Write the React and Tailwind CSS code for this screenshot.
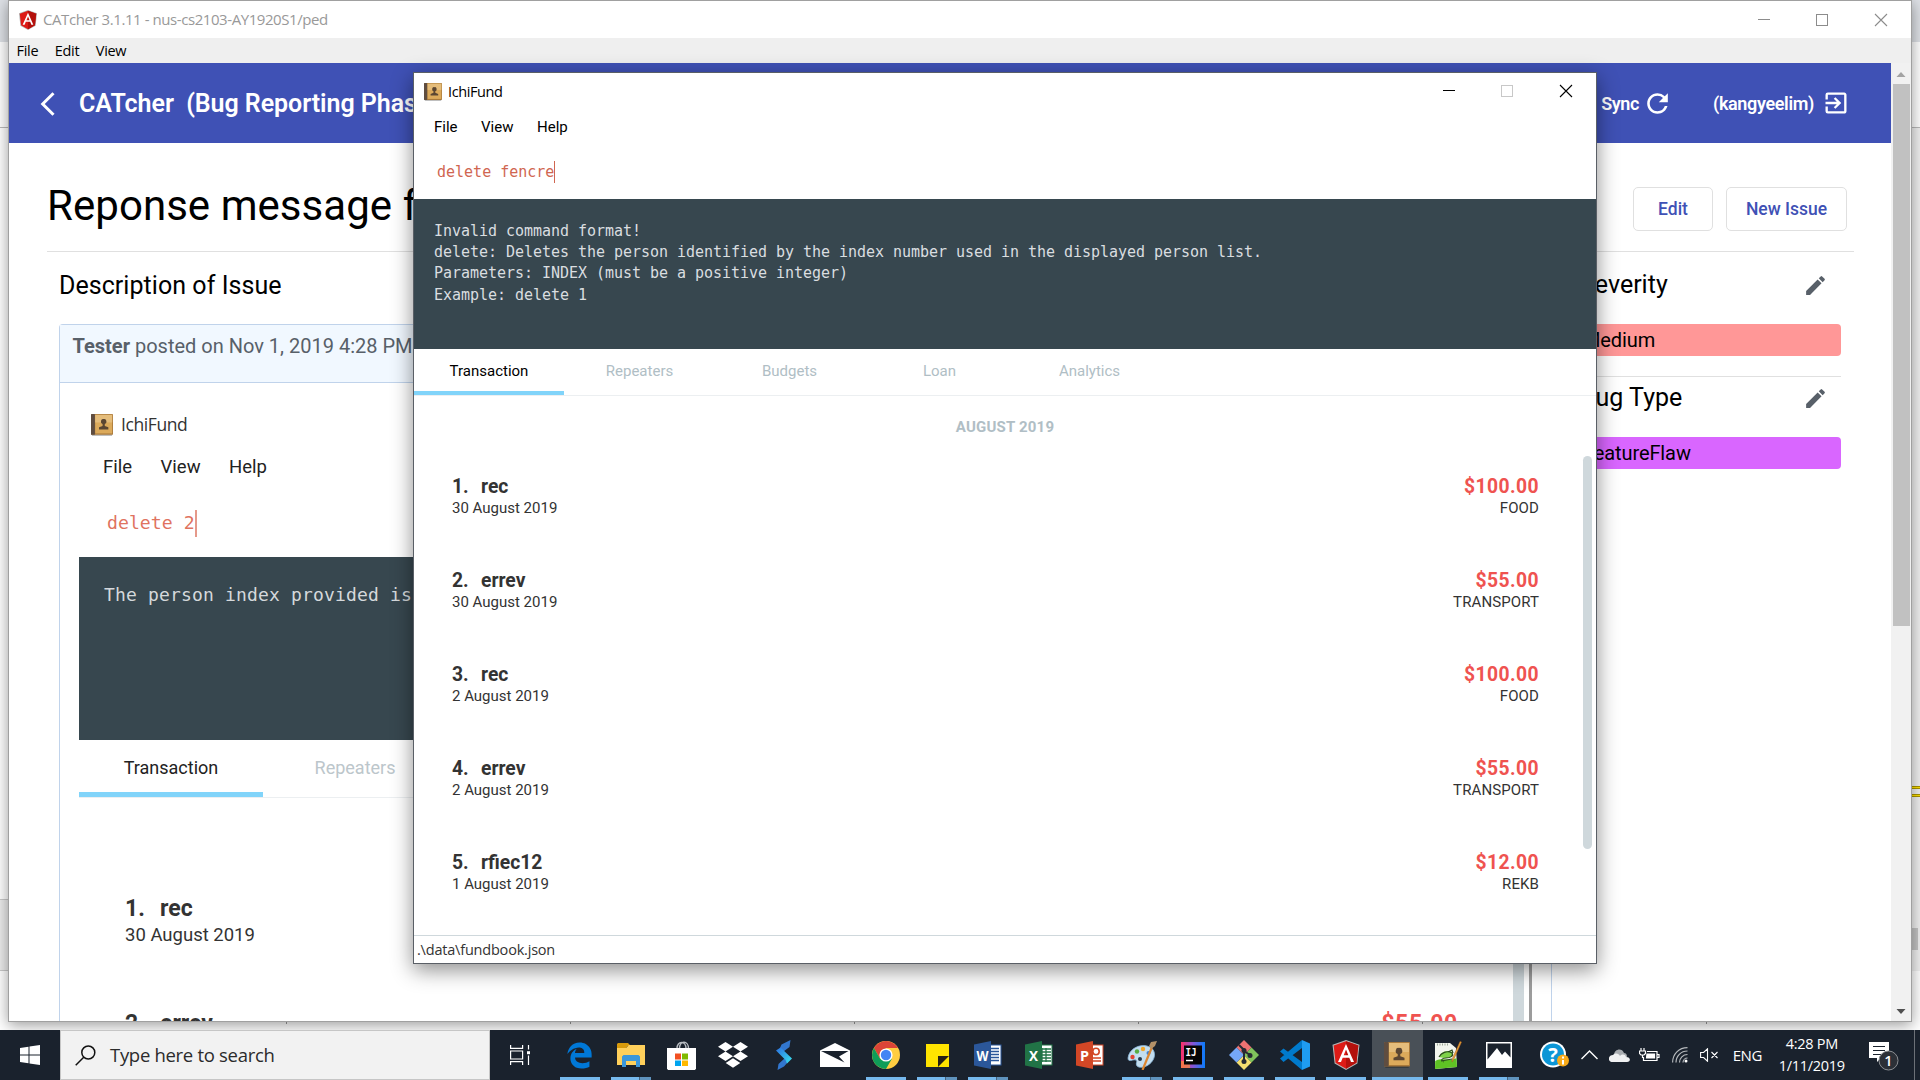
import React from "react";
import { MdRefresh, MdExitToApp, MdEdit } from "react-icons/md";
import { FaEdgeLegacy } from "react-icons/fa";

const ROBOTO = "font-['Roboto','Liberation_Sans',sans-serif]";
const SEGOE = "font-['Open_Sans','Noto_Sans',sans-serif]";
const MONO = "font-['DejaVu_Sans_Mono','Liberation_Mono',monospace]";

const transactions = [
  { id: 1, name: "rec", date: "30 August 2019", amount: "$100.00", category: "FOOD" },
  { id: 2, name: "errev", date: "30 August 2019", amount: "$55.00", category: "TRANSPORT" },
  { id: 3, name: "rec", date: "2 August 2019", amount: "$100.00", category: "FOOD" },
  { id: 4, name: "errev", date: "2 August 2019", amount: "$55.00", category: "TRANSPORT" },
  { id: 5, name: "rfiec12", date: "1 August 2019", amount: "$12.00", category: "REKB" },
];

function AngularLogo({ className }) {
  return (
    <svg viewBox="0 0 28 30" className={className}>
      <path d="M14 0 27.5 4.8 25.4 23.5 14 30 2.6 23.5 .5 4.8Z" fill="#b3b3b3" />
      <path d="M14 1.2 26.3 5.6 24.4 22.8 14 28.7 3.6 22.8 1.7 5.6Z" fill="#dd1b16" />
      <path d="M14 1.2 26.3 5.6 24.4 22.8 14 28.7Z" fill="#b3110c" />
      <path d="M14 4 6 22h3l1.7-4.2h6.6L19 22h3ZM14 9.6l2.3 5.7h-4.6Z" fill="#fff" fillRule="evenodd" />
    </svg>
  );
}

function AddressBook({ className }) {
  return (
    <svg viewBox="0 0 26 26" className={className}>
      <rect x="1" y="24" width="24" height="2" rx="1" fill="#000" opacity=".25" />
      <rect x="0" y="0" width="26" height="24.5" rx="1" fill="#a9793a" />
      <rect x="5" y="1" width="20" height="22" fill="#dcaa5b" />
      <rect x="5" y="1" width="20" height="9" fill="#e5bd7b" />
      <rect x="0" y="0" width="4.6" height="24.5" rx="1" fill="#5f4d40" />
      <path d="M15 6a2.600 3 0 0 1 1.300 5.900v2.300l4.200 1.600v2.400h-11v-2.400l4.200-1.600v-2.300A2.600 3 0 0 1 15 6Z" fill="#5b4632" />
    </svg>
  );
}

function WindowButtons({ tone, maxTone }) {
  return (
    <div className="flex pr-[2px]">
      <svg width="58" height="36" viewBox="0 0 58 36" stroke={tone} fill="none" shapeRendering="crispEdges">
        <path d="M23 17.500h12" />
      </svg>
      <svg width="58" height="36" viewBox="0 0 58 36" stroke={maxTone} fill="none" shapeRendering="crispEdges">
        <rect x="23.500" y="12.500" width="11" height="11" />
      </svg>
      <svg width="58" height="36" viewBox="0 0 58 36" stroke={tone} fill="none" strokeWidth="1.100">
        <path d="m24 12 12 12M36 12 24 24" />
      </svg>
    </div>
  );
}

function SideSection({ title, value, chip, last }) {
  return (
    <section className="h-[113px]">
      <div className="flex h-[44px] items-center justify-between pr-[13px] text-[25px] text-black">
        <h3 className="leading-[30px]">{title}</h3>
        <MdEdit className="size-[25px] text-[#586069]" />
      </div>
      <div className={`mt-[17px] flex h-[32px] items-center rounded-[4px] pl-[3px] text-[20px] tracking-[-0.100px] text-black ${chip}`}>{value}</div>
      {!last && <div className="mt-[20px] h-px bg-[#e0e0e0]" />}
    </section>
  );
}

function PostedImage() {
  return (
    <div className={`relative ml-[19px] h-[640px] w-[1453px] border-r-[3px] border-[#9c9c9c] ${ROBOTO}`}>
      <div className="flex h-[36px] items-center pl-[12px] pt-[3px]">
        <AddressBook className="size-[22px]" />
        <span className={`ml-[8px] text-[17.500px] tracking-[-0.400px] text-[#333] ${SEGOE}`}>IchiFund</span>
      </div>
      <div className="mt-[7px] flex h-[40px] items-center gap-[28.500px] pl-[24px] text-[18.500px] text-[#222]">
        <span>File</span><span>View</span><span>Help</span>
      </div>
      <div className={`mt-[15px] flex h-[40px] items-center pl-[28px] text-[18.200px] text-[#e0735f] ${MONO}`}>
        delete 2<span className="h-[27px] w-[2px] bg-[#e5998a]" />
      </div>
      <div className="mt-[14px] flex h-[183px] items-start bg-[#37474f] pl-[25px] pt-[25px]">
        <span className={`whitespace-pre text-[18px] leading-[26px] tracking-[0.160px] text-[#d5d9dc] ${MONO}`}>The person index provided is</span>
      </div>
      <div className="flex h-[58px] border-b border-[#eceff1] text-[18px]">
        <div className="flex w-[184px] items-center justify-center border-b-[5px] border-[#81d4fa] pt-[2px] text-[#222]">Transaction</div>
        <div className="flex w-[184px] items-center justify-center pb-[3px] text-[#bcc6cb]">Repeaters</div>
      </div>
      <div className="pl-[46px] pr-[71px] pt-[97px]">
        {transactions.slice(0, 2).map((t) => (
          <div key={t.id} className="flex h-[115px] justify-between">
            <div className="text-[#333]">
              <div className="flex text-[23px] font-bold leading-[28px]"><span className="w-[35px]">{t.id}.</span>{t.name}</div>
              {t.id === 1 && <div className="text-[18.500px] leading-[24px]">{t.date}</div>}
            </div>
            {t.id === 2 && <div className="text-[23px] font-bold leading-[28px] tracking-[0.700px] text-[#ef5350]">{t.amount}</div>}
          </div>
        ))}
      </div>
      <div className="absolute right-[5px] top-[320px] h-[320px] w-[11px] bg-[#cfd8dc]" />
    </div>
  );
}

function CatcherWindow() {
  return (
    <div className={`absolute left-[8px] top-0 flex h-[1022px] w-[1904px] flex-col border border-[#a0a0a0] bg-white shadow-[0_3px_14px_rgba(0,0,0,0.400)] ${ROBOTO}`}>
      <div className="flex h-[37px] shrink-0 items-center justify-between pl-[9px]">
        <div className="flex items-center">
          <AngularLogo className="h-[20px] w-[20px]" />
          <span className={`ml-[5px] whitespace-pre text-[15px] tracking-[-0.430px] text-[#999] ${SEGOE}`}>CATcher 3.1.11 - nus-cs2103-AY1920S1/ped</span>
        </div>
        <WindowButtons tone="#8c8c8c" maxTone="#8c8c8c" />
      </div>
      <div className={`flex h-[25px] shrink-0 items-center gap-[16.500px] bg-[#efefef] pl-[7.500px] text-[14.500px] tracking-[-0.300px] text-black ${SEGOE}`}>
        <span>File</span><span>Edit</span><span>View</span>
      </div>
      <div className="flex min-h-0 flex-1">
        <div className="flex min-w-0 flex-1 flex-col overflow-hidden">
          <header className="flex h-[80px] shrink-0 items-center justify-between bg-[#3f51b5] pl-[31px] pr-[41px] font-semibold text-white">
            <div className="flex items-center text-[25px]">
              <svg width="15" height="24" viewBox="0 0 15 24" fill="none" stroke="#fff" strokeWidth="3" className="mt-[2px]"><path d="M13.500 1.200 2.700 12l10.800 10.800" /></svg>
              <span className="ml-[24px] whitespace-pre pt-[2px] tracking-[-0.050px]">CATcher  (Bug Reporting Phase)</span>
            </div>
            <div className="flex items-center text-[18px] tracking-[-0.400px]">
              <span>Sync</span>
              <MdRefresh className="ml-[3px] size-[31px]" />
              <span className="ml-[40px] tracking-[-0.350px]">(kangyeelim)</span>
              <MdExitToApp className="ml-[8px] size-[28px]" />
            </div>
          </header>
          <main className="flex min-h-0 flex-1 flex-col pl-[38px] pr-[37px]">
            <div className="flex h-[109px] shrink-0 items-center justify-between border-b border-[#e0e0e0] pr-[7px]">
              <h1 className="pt-[18px] text-[42px] leading-[50px] tracking-[0.050px] text-black">Reponse message f</h1>
              <div className="flex gap-[13px] pt-[23px] text-[17.500px] font-medium leading-none text-[#3f51b5]">
                <button className="h-[44px] w-[80px] rounded-[5px] border border-[#e0e0e0] pt-[2px]">Edit</button>
                <button className="h-[44px] w-[121px] rounded-[5px] border border-[#e0e0e0] pt-[2px]">New Issue</button>
              </div>
            </div>
            <div className="flex min-h-0 flex-1 justify-between pr-[13px]">
              <div className="flex w-[1505px] flex-col pl-[12px]">
                <h2 className="h-[72px] shrink-0 pt-[19px] text-[25px] leading-[30px] tracking-[0.050px] text-black">Description of Issue</h2>
                <div className="min-h-0 flex-1 rounded-t-[4px] border border-b-0 border-[#c0d3eb]">
                  <div className="h-[58px] border-b border-[#c0d3eb] bg-[#f1f8ff] pl-[12.500px] pt-[6px] text-[20px] leading-[30px] text-[#586069]">
                    <b>Tester</b> posted on Nov 1, 2019 4:28 PM.
                  </div>
                  <div className="pt-[22px]"><PostedImage /></div>
                </div>
              </div>
              <aside className="w-[261px] pt-[11px]">
                <SideSection title="Severity" value="Medium" chip="bg-[#ff9797]" />
                <SideSection title="Bug Type" value="FeatureFlaw" chip="bg-[#d966ff]" last />
              </aside>
            </div>
          </main>
        </div>
        <div className="flex w-[20px] flex-col items-center justify-between bg-[#f1f1f1]">
          <svg width="20" height="21" viewBox="0 0 20 21"><path d="m5.500 14 4.500-5 4.500 5Z" fill="#a3a3a3" /></svg>
          <div className="mb-auto h-[542px] w-[17px] bg-[#c1c1c1]" />
          <svg width="20" height="21" viewBox="0 0 20 21"><path d="m5.500 9 4.500 5 4.500-5Z" fill="#505050" /></svg>
        </div>
      </div>
    </div>
  );
}

function IchiFundWindow() {
  return (
    <div className={`absolute left-[413px] top-[72px] flex h-[892px] w-[1184px] flex-col border border-[#5a5f66] bg-white shadow-[0_6px_20px_rgba(0,0,0,0.450)] ${ROBOTO}`}>
      <div className="flex h-[37px] shrink-0 items-start justify-between pl-[10px]">
        <div className="flex h-[37px] items-center">
          <AddressBook className="size-[18px]" />
          <span className={`ml-[6px] text-[14.500px] tracking-[-0.400px] text-black ${SEGOE}`}>IchiFund</span>
        </div>
        <WindowButtons tone="#000" maxTone="#c8c8c8" />
      </div>
      <div className="flex h-[35px] shrink-0 items-center gap-[23.500px] pl-[20px] text-[15px] text-black">
        <span>File</span><span>View</span><span>Help</span>
      </div>
      <div className={`flex h-[54px] shrink-0 items-center pl-[23px] text-[15px] text-[#d06651] ${MONO}`}>
        delete fencre<span className="h-[22px] w-px bg-[#d06651]" />
      </div>
      <pre className={`h-[150px] shrink-0 bg-[#37474f] pl-[20px] pt-[21.500px] text-[15px] leading-[21.400px] tracking-[-0.030px] text-[#dadee0] ${MONO}`}>
        {"Invalid command format!\ndelete: Deletes the person identified by the index number used in the displayed person list.\nParameters: INDEX (must be a positive integer)\nExample: delete 1"}
      </pre>
      <div className="flex h-[47px] shrink-0 border-b border-[#eceff1] text-[15px]">
        <div className="flex w-[150px] items-center justify-center border-b-[4px] border-[#81d4fa] pt-[2px] text-black">Transaction</div>
        {["Repeaters", "Budgets", "Loan", "Analytics"].map((t) => (
          <div key={t} className="flex w-[150px] items-center justify-center pb-[2px] pl-px text-[#b0bec5]">{t}</div>
        ))}
      </div>
      <div className="flex h-[60px] shrink-0 items-center justify-center pt-[2px] text-[15px] font-bold tracking-[0.200px] text-[#b0bec5]">AUGUST 2019</div>
      <div className="flex min-h-0 flex-1 justify-between pl-[38px]">
        <div className="w-[1087px] pt-[19px]">
          {transactions.map((t) => (
            <div key={t.id} className="flex h-[94px] justify-between text-[15px] leading-[20px] text-[#333]">
              <div>
                <div className="flex text-[19.300px] font-bold leading-[24px]"><span className="w-[29px]">{t.id}.</span>{t.name}</div>
                <div className="-mt-px">{t.date}</div>
              </div>
              <div className="text-right">
                <div className="text-[19.300px] font-bold leading-[24px] tracking-[0.450px] text-[#ef5350]">{t.amount}</div>
                <div className="-mt-px tracking-[0.100px]">{t.category}</div>
              </div>
            </div>
          ))}
        </div>
        <div className="mr-[4px] h-[393px] w-[9px] rounded-full bg-[#cfd8dc]" />
      </div>
      <div className={`flex h-[28px] shrink-0 items-center border-t border-[#cfd8dc] pt-[1px] pl-[3px] text-[14.500px] tracking-[-0.200px] text-[#333] ${SEGOE}`}>.\data\fundbook.json</div>
    </div>
  );
}

function OfficeIcon({ letter, color, kind }) {
  return (
    <svg width="28" height="28" viewBox="0 0 28 28">
      <rect x="13" y="4" width="14" height="20" fill="#fff" stroke={color} />
      {kind === "word" && <path d="M16 7.500h9M16 10.500h9M16 13.500h9M16 16.500h9M16 19.500h9" stroke={color} strokeWidth="1.500" />}
      {kind === "excel" && <path d="M17 7v14M21 7v14M15 8h11M15 11h11M15 14h11M15 17h11M15 20h11" stroke={color} strokeWidth="1.300" />}
      {kind === "ppt" && <g fill="none" stroke={color} strokeWidth="1.600"><circle cx="20" cy="10.500" r="3.200" /><path d="M16 17h9M16 20h9" /></g>}
      <path d="M0 3.500 17 0v28L0 24.500Z" fill={color} />
      <text x="8.500" y="19.500" textAnchor="middle" fontSize="15" fontWeight="700" fontFamily="Open Sans, sans-serif" fill="#fff" textLength={kind === "word" ? 12 : 9} lengthAdjust="spacingAndGlyphs">{letter}</text>
    </svg>
  );
}

const icons = {
  edge: <FaEdgeLegacy className="size-[27px] text-[#0078d7]" />,
  explorer: (
    <svg width="28" height="24" viewBox="0 0 28 24">
      <path d="M1 0h10l3 3h-3l-2 2H0V1Z" fill="#d89a0b" />
      <path d="M0 5h9l3-3h16v20H0Z" fill="#ffd05b" />
      <path d="M5 24V13.500l1.500-1.500h15l1.500 1.500V24h-4v-6H9v6Z" fill="#3b97db" />
    </svg>
  ),
  store: (
    <svg width="29" height="29" viewBox="0 0 29 29">
      <path d="M10 7.500c0-8 9-8 9 0M12.500 7.500c0-9 9-8 9 0" fill="none" stroke="#b9bdc2" strokeWidth="1.400" />
      <path d="M0 7h29v20.500L28 29H1l-1-1.500Z" fill="#fff" />
      <path d="M8 12.500h6v6H8Z" fill="#f25022" /><path d="M15 12.500h6v6h-6Z" fill="#7fba00" />
      <path d="M8 19.500h6v5.500H8Z" fill="#00a4ef" /><path d="M15 19.500h6v5.500h-6Z" fill="#ffb900" />
    </svg>
  ),
  dropbox: (
    <svg width="30" height="26" viewBox="0 0 30 26" fill="#fff">
      <path d="m7.500 0 7.500 4.700-7.500 4.700L0 4.700ZM22.500 0 30 4.700l-7.500 4.700L15 4.700ZM7.500 9.600l7.500 4.700L7.500 19 0 14.300ZM22.500 9.600l7.500 4.700-7.500 4.700-7.500-4.700ZM15 16.200l7.300 4.700L15 25.700l-7.300-4.800Z" />
    </svg>
  ),
  shift: (
    <svg width="16" height="30" viewBox="0 0 16 30">
      <defs><linearGradient id="shift" x1="0" x2="1" y1="0" y2="1"><stop stopColor="#2c6fe0" /><stop offset="1" stopColor="#39e6ee" /></linearGradient></defs>
      <path d="M14.500 0 13.500 7 7.500 11.500 4 8 5.500 4.500ZM1.500 30 2.500 24l6-5.500L12 22l-4 4.500Z" fill="#3277cf" />
      <path d="M0 10.500 4.500 7.500 16 18.500l-5 5 -1.500-3.500Z" fill="url(#shift)" />
    </svg>
  ),
  mail: (
    <svg width="30" height="24" viewBox="0 0 30 24">
      <path d="M0 7.500 15 0l15 7.500V24H0Z" fill="#fff" />
      <path d="M1 8h27.500L19 13.500l5.500 6Z" fill="#1a222d" />
    </svg>
  ),
  chrome: (
    <svg width="28" height="28" viewBox="0 0 28 28">
      <circle cx="14" cy="14" r="14" fill="#ffcd41" />
      <path d="M1.900 7A14 14 0 0 1 26.100 7H14L8 17.500Z" fill="#db4437" />
      <path d="M1.900 7A14 14 0 0 0 14 28l6-10.500H8Z" fill="#0f9d58" />
      <circle cx="14" cy="14" r="6.600" fill="#fff" /><circle cx="14" cy="14" r="5.200" fill="#4285f4" />
    </svg>
  ),
  sticky: (
    <svg width="23" height="23" viewBox="0 0 23 23"><path d="M0 0h23v23H0Z" fill="#ffe400" /><path d="M12 12h11L12 23Z" fill="#252014" /></svg>
  ),
  word: <OfficeIcon letter="W" color="#2b579a" kind="word" />,
  excel: <OfficeIcon letter="X" color="#217346" kind="excel" />,
  ppt: <OfficeIcon letter="P" color="#d24726" kind="ppt" />,
  paint: (
    <svg width="30" height="29" viewBox="0 0 30 29">
      <path d="M1 17C2 8 12 3 20 5c8 2 9 9 6 14-4 7-13 9-16 6-2-3 1-4-1-6-3-1-8 3-8-2Z" fill="#c3def0" stroke="#87b4d6" strokeWidth=".8" />
      <circle cx="5.500" cy="16" r="2.200" fill="#e04433" /><circle cx="10" cy="10.500" r="2.200" fill="#58ad42" />
      <circle cx="16" cy="8" r="2.200" fill="#f0a72e" /><circle cx="21.500" cy="12" r="2" fill="#3d81d0" /><circle cx="13" cy="18" r="2" fill="#26384a" />
      <path d="M25 6 15.500 29" stroke="#dc8630" strokeWidth="2.200" /><path d="m22 5 2-4 6-1-2 5-4 3Z" fill="#b39168" />
    </svg>
  ),
  intellij: (
    <svg width="24" height="26" viewBox="0 0 24 26">
      <defs><linearGradient id="ij" x1="0" x2="1"><stop stopColor="#fc2f66" /><stop offset=".5" stopColor="#8457d8" /><stop offset="1" stopColor="#087cfa" /></linearGradient></defs>
      <rect width="24" height="26" fill="url(#ij)" /><path d="M0 19h9v7H0Z" fill="#f78f3b" opacity=".7" /><rect x="3" y="3.500" width="18" height="19" fill="#050505" />
      <text x="4.500" y="14" fontSize="10.500" fontWeight="700" fontFamily="DejaVu Sans Mono, monospace" fill="#fff" textLength="11" lengthAdjust="spacingAndGlyphs">IJ</text>
      <path d="M5 18.500h7" stroke="#fff" strokeWidth="1.500" />
    </svg>
  ),
  git: (
    <svg width="30" height="30" viewBox="0 0 30 30">
      <path d="M15 0 22.500 7.500 15 15 7.500 7.500Z" fill="#ef7272" /><path d="m22.500 7.500 7.500 7.500-7.500 7.500L15 15Z" fill="#80c35c" />
      <path d="m7.500 22.500 7.500-7.500 7.500 7.500L15 30Z" fill="#f5df70" /><path d="M0 15 7.500 7.500 15 15l-7.500 7.500Z" fill="#75a7f8" />
      <path d="M10 5l5 5v11M15 11l6 4" fill="none" stroke="#262b33" strokeWidth="2" /><circle cx="15" cy="10.500" r="2.500" fill="#262b33" /><circle cx="15" cy="21.500" r="2.500" fill="#262b33" /><circle cx="21" cy="15.500" r="2.500" fill="#262b33" />
    </svg>
  ),
  vscode: (
    <svg width="30" height="30" viewBox="0 0 30 30">
      <path d="M0 18.500 22 0v8L3.500 22ZM3.500 8.500 22 22v8L0 11.500Z" fill="#007acc" /><path d="m22 0 8 3.500v23L22 30Z" fill="#1f9cf0" />
    </svg>
  ),
  angular: <AngularLogo className="h-[30px] w-[30px]" />,
  ichi: <AddressBook className="size-[26px]" />,
  npp: (
    <svg width="28" height="29" viewBox="0 0 28 29">
      <path d="M1 2h15l6 5 1 19-22 2Z" fill="#f3f6ee" /><path d="M1.200 20C9 16 17 21 22.500 17l.5 9-22 2Z" fill="#5fc224" />
      <path d="M3 3.500h12" stroke="#9ba596" strokeDasharray="1 1.500" strokeWidth="2" />
      <path d="M6 14c2-4 9-5 12-3 3 3-1 6-5 6s-9 0-7-3Z" fill="#7ed348" />
      <path d="M5 16c2-4 8-7 13-4 2 3-2 5-6 5s-6 2-2 4M14 11l4-2 1 3M7 20l11-2" fill="none" stroke="#2d4c20" strokeWidth="1.200" />
      <path d="M27.500 1 20 18l-2 3 .5-3.800L26 .5Z" fill="#e9a93a" stroke="#a85820" strokeWidth=".5" />
    </svg>
  ),
  photos: (
    <svg width="26" height="26" viewBox="0 0 26 26"><rect width="26" height="26" fill="#fff" /><path d="M1.500 1.500h23v14l-5.500-6-3 3.500L11 6 1.500 17.500Z" fill="#1a222d" /></svg>
  ),
};

const apps = [
  ["edge", "one"], ["explorer", "many"], ["store"], ["dropbox"], ["shift"], ["mail"], ["chrome", "one"], ["sticky", "many"],
  ["word", "many"], ["excel"], ["ppt"], ["paint", "many"], ["intellij", "one"], ["git", "one"], ["vscode", "one"],
  ["angular", "one"], ["ichi", "active"], ["npp", "one"], ["photos", "many"],
];

function Taskbar() {
  return (
    <div className={`absolute bottom-0 left-0 flex h-[50px] w-[1920px] items-stretch bg-[#1a222d] text-white ${SEGOE}`}>
      <div className="flex w-[60px] items-center justify-center">
        <svg width="20" height="20" viewBox="0 0 20 20" fill="#fff"><path d="M0 3 8.500 1.800v7.700H0ZM9.500 1.600 20 0v9.500H9.500ZM0 10.500h8.500v7.700L0 17ZM9.500 10.500H20V20L9.500 18.400Z" /></svg>
      </div>
      <div className="flex w-[430px] items-center border border-[#c6c6c6] bg-[#f2f2f2] pl-[14px]">
        <svg width="21" height="21" viewBox="0 0 21 21" fill="none" stroke="#111" strokeWidth="1.500"><circle cx="13.300" cy="7.500" r="6.500" /><path d="M8.700 12.200.7 20.300" /></svg>
        <span className="ml-[14px] text-[18.500px] tracking-[-0.300px] text-[#2b2b2b]">Type here to search</span>
      </div>
      <div className="flex w-[64px] items-center pl-[20px]">
        <svg width="20" height="20" viewBox="0 0 20 20" fill="none" stroke="#fff" strokeWidth="1.200"><path d="M.6 0v3.400h12V0M.6 20v-3.400h12V20M.6 6h12v8H.6ZM18.500 0v4.500M18.500 10.500V20" /><path d="M17 6.200h3v3h-3Z" fill="#fff" stroke="none" /></svg>
      </div>
      <div className="flex">
        {apps.map(([name, state]) => (
          <div key={name} className={`flex w-[51.100px] flex-col items-center ${state === "active" ? "bg-[#495057]" : ""}`}>
            <div className="flex h-[47px] items-center justify-center pt-[3px]">{icons[name]}</div>
            {state === "one" && <div className="h-[3px] w-[40px] bg-[#76b9ed]" />}
            {state === "active" && <div className="h-[3px] w-full bg-[#76b9ed]" />}
            {state === "many" && <div className="flex h-[3px] w-[40px] bg-[#5f93bd]"><div className="w-[29px] border-r border-[#44637d] bg-[#76b9ed]" /></div>}
          </div>
        ))}
      </div>
      <div className="flex flex-1 items-center pl-[15px]">
        <svg width="30" height="29" viewBox="0 0 30 29">
          <circle cx="13" cy="13.500" r="13" fill="#fff" /><circle cx="13" cy="13.500" r="11" fill="#0c96d6" />
          <text x="13" y="21" textAnchor="middle" fontSize="20" fontWeight="700" fontFamily="Open Sans, sans-serif" fill="#fff">?</text>
          <circle cx="23" cy="19.500" r="6" fill="#f9ab1a" /><path d="M23 15.500v2M23 19v4.500" stroke="#fff" strokeWidth="2" />
        </svg>
        <svg className="ml-[11px]" width="17" height="10" viewBox="0 0 17 10" fill="none" stroke="#fff" strokeWidth="1.400"><path d="M.5 9 8.500 1l8 8" /></svg>
        <svg className="ml-[11px]" width="21" height="13" viewBox="0 0 21 13"><path d="M5 6C5 0 13-2 15 4c3 0 3 3 3 4H4Z" fill="#a9adb1" /><path d="M4 13c-6 0-5-7 0-7 3-3 6-1 7 1 2-2 5-2 6 1 5 0 5 5 1 5Z" fill="#f0f1f2" /></svg>
        <svg className="ml-[9px]" width="21" height="14" viewBox="0 0 21 14" fill="none" stroke="#fff" strokeWidth="1.200"><path d="M8 3.500h10v9H4.500V9M18.500 6.500h1.500v3h-1.500M2 0v3M5 0v3M.5 3h6v2.500L5 7H2L.5 5.500ZM3.500 7v3" /><path d="M8 6h7.500v4H7.500Z" fill="#fff" /></svg>
        <svg className="ml-[12px]" width="16" height="16" viewBox="0 0 16 16" fill="none" stroke="#b6babd" strokeWidth="1.200"><path d="M.6 15.500C.6 7 7 .6 15.500.6M4 15.500C4 9 9 4 15.500 4M7.500 15.500c0-4.500 3.500-8 8-8M11 15.500c0-2.500 2-4.500 4.500-4.500" /><circle cx="14" cy="14" r="1.500" fill="#fff" stroke="none" /></svg>
        <svg className="ml-[12px]" width="19" height="14" viewBox="0 0 19 14" fill="none" stroke="#fff" strokeWidth="1.100"><path d="M.6 4.500h3L7.500.8v12.400L3.600 9.500h-3ZM11.500 4l6 6M17.500 4l-6 6" /></svg>
        <span className="ml-[14px] text-[15px] tracking-[-0.500px]">ENG</span>
        <div className="ml-[16px] w-[68px] whitespace-nowrap text-center text-[14.500px] leading-[22.500px] tracking-[-0.300px]">4:28 PM<br />1/11/2019</div>
        <div className="ml-[23px] h-[30px] w-[30px] pt-[1px]">
          <svg width="30" height="30" viewBox="0 0 30 30"><path d="M0 1h20v16h-8l-4 4v-4H0Z" fill="#fff" /><path d="M4 5.500h12M4 9.500h12M4 13.500h8" stroke="#1a222d" strokeWidth="1.200" /><circle cx="19.500" cy="19.500" r="9.500" fill="#2c3037" stroke="#8b8e92" /><text x="19.500" y="25" textAnchor="middle" fontSize="14.500" fontWeight="600" fontFamily="Open Sans, sans-serif" fill="#fff">1</text></svg>
        </div>
      </div>
      <div className="w-[6px] border-l border-[#6c7177]" />
    </div>
  );
}

function Backdrop() {
  return (
    <div className="flex h-[1030px] flex-col bg-white">
      <div className="h-[42px] bg-[#dee1e6]" />
      <div className="h-[86px] border-b border-[#b9b9b9] bg-white" />
      <div className="flex flex-1 justify-between">
        <div className="flex w-[40px] flex-col">
          <div className="h-[771px]" />
          <div className="h-[72px] border-y border-[#c9c9c9] bg-[#ececec]" />
          <div className="flex-1 bg-white" />
        </div>
        <div className="flex w-[40px] flex-col bg-[#f0f0f0] pt-[658px]">
          <div className="h-[3px] border-y border-[#a89300] bg-[#ffe100]" />
          <div className="mt-[5px] h-[3px] border-y border-[#a89300] bg-[#ffe100]" />
          <div className="mt-[131px] h-[22px] w-[38px] bg-[#c4c4c4]" />
          <div className="mt-[21px] flex-1 bg-white" />
        </div>
      </div>
      <div className="flex h-[9px] bg-white pb-[6px] pl-[3px]">
        {[0, 1, 2, 3, 4, 5].map((i) => <div key={i} className="w-[284px] border-r border-[#999]" />)}
      </div>
    </div>
  );
}

export default function App() {
  return (
    <div className="relative h-[1080px] w-[1920px] overflow-hidden bg-white">
      <Backdrop />
      <CatcherWindow />
      <IchiFundWindow />
      <Taskbar />
    </div>
  );
}
